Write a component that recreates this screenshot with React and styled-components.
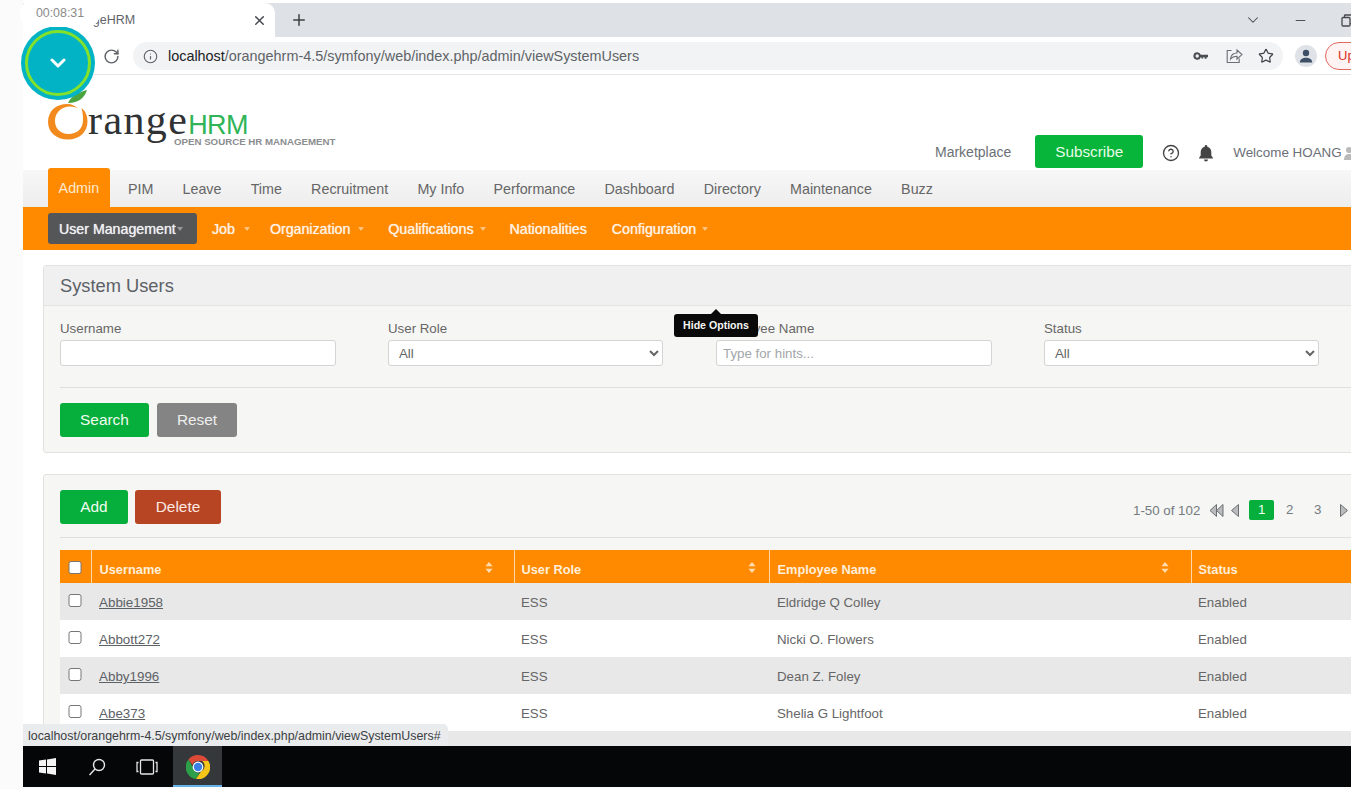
import React from "react";
import styled, { createGlobalStyle } from "styled-components";
import { X, Plus, ChevronDown, Minus, RotateCw, Info, Star, CircleHelp } from "lucide-react";

const Global = createGlobalStyle`
  html, body { margin: 0; padding: 0; background: #fbfbfb; }
  body { font-family: "Liberation Sans", Arial, sans-serif; }
  * { box-sizing: border-box; }
`;

const Screen = styled.div`
  position: relative;
  width: 1351px;
  height: 789px;
  overflow: hidden;
  display: flex;
  background: #fbfbfb;
`;
const Gutter = styled.div`
  flex: 0 0 23px;
`;
const Browser = styled.div`
  flex: 0 0 1328px;
  width: 1328px;
  height: 787px;
  padding-top: 3px;
  display: flex;
  flex-direction: column;
  overflow: hidden;
  position: relative;
  background: #fff;
`;

/* ---------- Chrome ---------- */
const TabStrip = styled.div`
  flex: 0 0 34px;
  display: flex;
  align-items: center;
  background: #dee1e6;
`;
const Tab = styled.div`
  width: 252px;
  height: 34px;
  background: #fff;
  border-radius: 10px 10px 0 0;
  display: flex;
  align-items: center;
  justify-content: space-between;
  padding: 0 8px 0 42px;
  font-size: 12.5px;
  color: #5f6368;
  svg { color: #45494e; }
`;
const NewTab = styled.div`
  margin-left: 15px;
  display: flex;
  color: #3c4043;
`;
const CaptionWrap = styled.div`
  margin-left: auto;
  display: flex;
  align-items: center;
  gap: 33px;
  margin-right: -3px;
  color: #45494e;
  & > :first-child { margin-right: -2px; }
`;
const Toolbar = styled.div`
  flex: 0 0 38px;
  display: flex;
  align-items: center;
  padding: 1px 0 0 80px;
  background: #fff;
  border-bottom: 1px solid #e3e5e8;
  color: #5f6368;
`;
const Reload = styled.div`
  display: flex;
  flex: 0 0 30px;
`;
const Omnibox = styled.div`
  flex: 0 0 1150px;
  height: 28px;
  border-radius: 14px;
  background: #f1f3f4;
  display: flex;
  align-items: center;
  padding: 0 8px 0 10px;
  font-size: 14.4px;
  color: #5f6368;
  svg { flex: none; }
`;
const Url = styled.span`
  margin-left: 10px;
  flex: 1;
  b { font-weight: 400; color: #202124; }
`;
const OmniActions = styled.div`
  display: flex;
  align-items: center;
  gap: 15px;
  padding-right: 1px;
`;
const Avatar = styled.div`
  flex: none;
  width: 22px;
  height: 22px;
  border-radius: 50%;
  background: #dfe3e8;
  margin-left: 12px;
  display: flex;
  align-items: center;
  justify-content: center;
`;
const UpgradePill = styled.div`
  flex: none;
  width: 70px;
  height: 28px;
  margin-left: 8px;
  border: 1px solid #e0685e;
  border-radius: 14px;
  font-size: 13px;
  line-height: 26px;
  padding-left: 12px;
  color: #d93025;
  background: #fff4f3;
`;

/* ---------- Page ---------- */
const Page = styled.div`
  flex: 1;
  min-height: 0;
  overflow: hidden;
  background: #fff;
  display: flex;
  flex-direction: column;
`;
const Header = styled.div`
  flex: 0 0 95px;
  display: flex;
  align-items: flex-end;
  padding: 0 0 2px 25px;
  z-index: 1;
`;
const Logo = styled.div`
  flex: 0 0 290px;
  width: 290px;
  min-width: 0;
  align-self: flex-start;
  margin-top: 15px;
  display: flex;
`;
const LogoMark = styled.svg`
  flex: none;
  width: 42px;
  height: 52px;
  margin-right: -2px;
`;
const LogoText = styled.div`
  padding-top: 6px;
`;
const LogoWord = styled.div`
  font-family: "Liberation Serif", serif;
  font-size: 42px;
  line-height: 48px;
  letter-spacing: 1.4px;
  color: #303234;
  white-space: nowrap;
`;
const LogoHrm = styled.span`
  font-family: "Liberation Sans", sans-serif;
  font-size: 27px;
  letter-spacing: -0.7px;
  color: #2fb457;
`;
const LogoTag = styled.div`
  margin: -13px 0 0 86px;
  font-size: 9.7px;
  font-weight: 700;
  line-height: 11px;
  color: #8b8d8f;
  white-space: nowrap;
`;
const UserArea = styled.div`
  margin-left: 597px;
  display: flex;
  align-items: center;
  font-size: 14px;
  color: #6b7076;
  white-space: nowrap;
  height: 33px;
`;
const Subscribe = styled.div`
  width: 108px;
  height: 33px;
  margin: 0 19px 0 24px;
  border-radius: 3px;
  background: #06b53a;
  color: #eafbe8;
  font-size: 15.3px;
  line-height: 33px;
  text-align: center;
`;
const HeaderIcon = styled.span`
  display: flex;
  color: #444;
  margin-top: 2px;
  margin-right: ${(p) => p.$gap}px;
`;
const Welcome = styled.span`
  display: flex;
  align-items: center;
  gap: 2px;
  margin-top: 2px;
  font-size: 13.4px;
`;

const Menu = styled.div`
  flex: 0 0 37px;
  display: flex;
  align-items: stretch;
  padding-left: 25px;
  background: linear-gradient(#f7f7f7, #ededed);
  font-size: 14.3px;
  color: #666;
`;
const MenuItem = styled.div`
  display: flex;
  align-items: center;
  white-space: nowrap;
  padding: 0 14.6px;
  ${(p) =>
    p.$active &&
    `
    margin: -2px 3.6px 0 0;
    padding: 0 10.6px;
    background: #ff8a00;
    color: #ffe9cf;
    border-radius: 3px 3px 0 0;
  `}
`;
const SubMenu = styled.div`
  flex: 0 0 43px;
  display: flex;
  align-items: center;
  padding-left: 25px;
  background: #ff8a00;
  font-size: 14.2px;
  color: #fff1e0;
  text-shadow: 0 0 0.8px currentColor;
`;
const SubItem = styled.div`
  display: flex;
  align-items: center;
  white-space: nowrap;
  height: 31px;
  ${(p) =>
    p.$active
      ? `
    width: 149px;
    padding-left: 11px;
    background: #555657;
    border-radius: 3px;
    color: #eef0f2;
    margin-right: 15px;
  `
      : `margin-right: ${p.$mr ?? 24}px;`}
`;
const Caret = styled.i`
  display: block;
  width: 0;
  height: 0;
  margin: 1px 0 0 ${(p) => p.$gap ?? 6}px;
  margin-right: ${(p) => p.$after ?? 0}px;
  border: 3.5px solid transparent;
  border-bottom: 0;
  border-top: 4px solid ${(p) => p.$color || "#ffc37d"};
`;
const Body = styled.div`
  width: 1350px;
  padding: 15px 0 0 20px;
  display: flex;
  flex-direction: column;
  gap: 21px;
  font-size: 13.3px;
  color: #666;
`;
const Panel = styled.div`
  width: 1330px;
  border: 1px solid #e2e2e0;
  border-radius: 3px;
  background: #f6f6f4;
  flex: none;
`;
const PanelHead = styled.div`
  height: 40px;
  padding-left: 16px;
  background: #f0f0f0;
  border-bottom: 1px solid #e4e4e4;
  font-size: 18.3px;
  line-height: 39px;
  color: #5c6166;
`;
const FilterForm = styled.div`
  padding: 15px 16px 15px;
`;
const Fields = styled.div`
  display: grid;
  grid-template-columns: repeat(4, 276px);
  column-gap: 52px;
`;
const Field = styled.label`
  display: flex;
  flex-direction: column;
  gap: 3px;
  line-height: 16px;
  color: #666;
`;
const TextInput = styled.input`
  width: 100%;
  height: 26px;
  padding: 0 6px;
  border: 1px solid #d4d4d4;
  border-radius: 3px;
  background: #fff;
  font: 13.3px "Liberation Sans", sans-serif;
  color: #555;
  outline: none;
  &::placeholder { color: #a2a6a8; }
`;
const SelectInput = styled.select`
  width: 275px;
  height: 26px;
  padding: 0 6px;
  border: 1px solid #d4d4d4;
  border-radius: 3px;
  background: #fff;
  font: 13.3px "Liberation Sans", sans-serif;
  color: #666;
  outline: none;
`;
const Rule = styled.div`
  height: 1px;
  background: #dfdfdd;
  margin: ${(p) => p.$margin};
`;
const Actions = styled.div`
  display: flex;
  align-items: center;
  gap: ${(p) => p.$gap}px;
`;
const Button = styled.div`
  width: ${(p) => p.$w}px;
  height: 34px;
  border-radius: 3px;
  background: ${(p) => p.$bg};
  color: ${(p) => p.$fg || "#f2fbef"};
  font-size: 15.4px;
  line-height: 34px;
  text-align: center;
`;
const ListPanel = styled.div`
  padding: 15px 16px 0;
`;
const ListBar = styled.div`
  display: flex;
  align-items: center;
  height: 34px;
`;
const Pager = styled.div`
  margin: 6px 0 0 auto;
  width: 223px;
  display: flex;
  align-items: center;
  font-size: 13.3px;
  color: #747a80;
  white-space: nowrap;
`;
const PagerIcon = styled.svg`
  flex: none;
  margin-left: ${(p) => p.$ml}px;
`;
const PageNum = styled.span`
  flex: none;
  width: 25px;
  height: 20px;
  line-height: 20px;
  text-align: center;
  margin-left: ${(p) => p.$ml}px;
  border-radius: 2px;
  ${(p) => p.$active && `background: #06ae3c; color: #f0fff0;`}
`;
const Table = styled.table`
  width: 1296px;
  table-layout: fixed;
  border-collapse: collapse;
`;
const HeadCell = styled.th`
  height: 33px;
  padding: 5px ${(p) => p.$pr ?? 8}px 0 ${(p) => p.$pl ?? 7}px;
  background: #ff8a00;
  border-left: 1px solid #ffd7a8;
  color: #ffeeda;
  font-size: 12.8px;
  font-weight: 700;
  text-align: left;
  vertical-align: middle;
  &:first-child { border-left: 0; padding: 3px 0 0; text-align: center; }
`;
const HeadInner = styled.div`
  display: flex;
  justify-content: space-between;
  align-items: center;
  svg { margin-top: -4px; }
`;
const Row = styled.tr`
  height: 37px;
  background: ${(p) => (p.$odd ? "#e8e8e8" : "#fff")};
`;
const Cell = styled.td`
  padding: 2px 7px 0 ${(p) => p.$pl ?? 7}px;
  font-size: 13.3px;
  color: #666;
  &:first-child { padding: 0; text-align: center; }
`;
const UserLink = styled.a`
  color: #5d6266;
  text-decoration: underline;
  font-size: 13.4px;
`;
const Check = styled.span`
  display: inline-block;
  width: 13px;
  height: 13px;
  border: 1px solid #767676;
  border-radius: 2.5px;
  background: #fff;
  transform: translate(-0.5px, -2px);
  vertical-align: middle;
`;

/* ---------- Overlays ---------- */
const RecorderTimer = styled.div`
  position: absolute;
  left: 20px;
  top: 0;
  width: 80px;
  height: 27px;
  border-radius: 13px;
  background: #fff;
  color: #8a8a8a;
  font-size: 12.4px;
  line-height: 26px;
  text-align: center;
  z-index: 5;
`;
const RecorderButton = styled.div`
  position: absolute;
  left: 21px;
  top: 26px;
  width: 74px;
  height: 74px;
  border-radius: 50%;
  background: #02b3c5;
  display: flex;
  align-items: center;
  justify-content: center;
  color: #fff;
  z-index: 4;
  &::before {
    content: "";
    position: absolute;
    inset: 4px;
    border: 3.5px solid #83e12c;
    border-radius: 50%;
  }
`;
const Tooltip = styled.div`
  position: absolute;
  left: 651px;
  top: 314px;
  width: 84px;
  height: 23px;
  border-radius: 3px;
  background: #0a0a0a;
  color: #f4f4f4;
  font-size: 10.6px;
  font-weight: 700;
  line-height: 22px;
  text-align: center;
  z-index: 3;
  &::before {
    content: "";
    position: absolute;
    left: 37px;
    top: -5px;
    border: 5px solid transparent;
    border-top: 0;
    border-bottom: 5px solid #0a0a0a;
  }
`;
const StatusBubble = styled.div`
  position: absolute;
  left: 0;
  bottom: 41px;
  height: 22px;
  padding: 0 7px 0 5px;
  background: #e9ebed;
  border-radius: 0 5px 0 0;
  color: #3c4043;
  font-size: 12.4px;
  line-height: 24px;
  z-index: 3;
`;

/* ---------- Taskbar ---------- */
const Taskbar = styled.div`
  flex: 0 0 41px;
  display: flex;
  align-items: stretch;
  background: #040608;
  z-index: 2;
`;
const TaskSlot = styled.div`
  width: ${(p) => p.$w}px;
  padding-right: ${(p) => p.$pr ?? 0}px;
  display: flex;
  align-items: center;
  justify-content: center;
  color: #f2f2f2;
  ${(p) => p.$active && `background: #34383b; border-bottom: 2px solid #63b2ea; padding-top: 2px;`}
`;

const users = [
  ["Abbie1958", "ESS", "Eldridge Q Colley", "Enabled"],
  ["Abbott272", "ESS", "Nicki O. Flowers", "Enabled"],
  ["Abby1996", "ESS", "Dean Z. Foley", "Enabled"],
  ["Abe373", "ESS", "Shelia G Lightfoot", "Enabled"],
  ["Abel1990", "ESS", "Angela Salome Stand", "Enabled"],
];

const SortIcon = () => (
  <svg width="8" height="11" viewBox="0 0 8 11" fill="#ffdcb0">
    <path d="M4 0l3.6 4.2H.4zM4 11L.4 6.8h7.2z" />
  </svg>
);

const Tri = ({ ml, double }) => (
  <PagerIcon $ml={ml} width={double ? 15 : 10} height="15" viewBox={double ? "0 0 15 15" : "0 0 10 15"} fill="#b9bbbc" stroke="#6d7073" strokeWidth="1">
    {double ? (
      <>
        <path d="M7.5 1.5v12L1 7.5z" />
        <path d="M14 1.5v12L7.5 7.5z" />
      </>
    ) : (
      <path d="M8.5 1.5v12L1.5 7.5z" />
    )}
  </PagerIcon>
);

export default function App() {
  return (
    <Screen>
      <Global />
      <Gutter />
      <Browser>
        <TabStrip>
          <Tab>
            <span>OrangeHRM</span>
            <X size={15} strokeWidth={2.4} />
          </Tab>
          <NewTab>
            <Plus size={18} strokeWidth={2} />
          </NewTab>
          <CaptionWrap>
            <ChevronDown size={18} strokeWidth={1.4} />
            <Minus size={15} strokeWidth={1.5} />
            <svg width="13" height="13" viewBox="0 0 13 13" fill="none" stroke="currentColor" strokeWidth="1.3">
              <rect x="1" y="3.5" width="8" height="8.5" rx="1" />
              <path d="M3.5 3.5V1.6A.6.6 0 0 1 4.1 1H11.4a.6.6 0 0 1 .6.6V9a.6.6 0 0 1-.6.6H9" />
            </svg>
          </CaptionWrap>
        </TabStrip>
        <Toolbar>
          <Reload>
            <RotateCw size={17} strokeWidth={2.1} />
          </Reload>
          <Omnibox>
            <Info size={15} strokeWidth={1.8} />
            <Url>
              <b>localhost</b>/orangehrm-4.5/symfony/web/index.php/admin/viewSystemUsers
            </Url>
            <OmniActions>
              <svg width="18" height="18" viewBox="0 0 18 18" fill="#4a4e52">
                <path fillRule="evenodd" d="M5.2 5.2a3.8 3.8 0 0 1 3.6 2.6H16v2.4h-1.4v1.6h-2v-1.6h-1.4v1.2H9.4v-1.2h-.6a3.8 3.8 0 1 1-3.6-5zm0 2.1a1.7 1.7 0 1 0 0 3.4 1.7 1.7 0 0 0 0-3.4z" />
              </svg>
              <svg width="18" height="18" viewBox="0 0 18 18" fill="none" stroke="#6a6e72" strokeWidth="1.1">
                <path d="M6.5 3.5H2.2v12h12v-4" />
                <path d="M5.5 12c.4-3.8 3-6 6.5-6V3l5 4.6-5 4.4V9.2c-2.8 0-5 .8-6.5 2.8z" />
              </svg>
              <Star size={16} strokeWidth={1.8} color="#3f4246" />
            </OmniActions>
          </Omnibox>
          <Avatar>
            <svg width="14" height="14" viewBox="0 0 14 14" fill="#3e5065">
              <circle cx="7" cy="4" r="3.2" />
              <path d="M.8 13.5c0-3.2 2.8-4.8 6.2-4.8s6.2 1.6 6.2 4.8z" />
            </svg>
          </Avatar>
          <UpgradePill>Update</UpgradePill>
        </Toolbar>
        <Page>
          <Header>
            <Logo>
              <LogoMark viewBox="0 0 42 52">
                <path d="M19 14C9 14 0 20 0 32c0 10 8 17.5 20 17.5 12 0 19.5-8 19.5-18 0-6-2-10.5-6-13.5 1 4 1.5 7 1.5 12 0 9-6.5 14-14.5 14-8 0-13.5-5.5-13.5-13 0-8 6-14.5 15-14.5 4 0 7 1 9 2.5C27.5 16 24 14 19 14z" fill="#f28a1e" />
                <path d="M20 13c3-7 11-11 19-13-2 7-8 13-19 13z" fill="#4aa53f" />
              </LogoMark>
              <LogoText>
                <LogoWord>
                  range<LogoHrm>HRM</LogoHrm>
                </LogoWord>
                <LogoTag>OPEN SOURCE HR MANAGEMENT</LogoTag>
              </LogoText>
            </Logo>
            <UserArea>
              <span>Marketplace</span>
              <Subscribe>Subscribe</Subscribe>
              <HeaderIcon $gap={17}>
                <CircleHelp size={18} strokeWidth={1.8} />
              </HeaderIcon>
              <HeaderIcon $gap={18}>
                <svg width="18" height="18" viewBox="0 0 18 18" fill="#444">
                  <path d="M9 1a1.3 1.3 0 0 1 1.3 1.3v.5c2.6.6 4 2.7 4 5.2v3.5l1.6 2.2v.8H2.1v-.8l1.6-2.2V8c0-2.5 1.4-4.6 4-5.2v-.5A1.3 1.3 0 0 1 9 1zM7 15.5h4a2 2 0 0 1-4 0z" />
                </svg>
              </HeaderIcon>
              <Welcome>
                Welcome HOANG
                <svg width="10" height="16" viewBox="0 0 10 16" fill="#b9b9b9">
                  <circle cx="5" cy="5" r="3" />
                  <path d="M0 15c0-4 2-6 5-6s5 2 5 6z" />
                </svg>
              </Welcome>
            </UserArea>
          </Header>
          <Menu>
            <MenuItem $active>Admin</MenuItem>
            {["PIM", "Leave", "Time", "Recruitment", "My Info", "Performance", "Dashboard", "Directory", "Maintenance", "Buzz"].map((m) => (
              <MenuItem key={m}>{m}</MenuItem>
            ))}
          </Menu>
          <SubMenu>
            <SubItem $active>
              User Management
              <Caret $gap={1} $color="#9a9a9a" />
            </SubItem>
            <SubItem>
              Job
              <Caret $gap={9} $after={-4} />
            </SubItem>
            <SubItem>
              Organization
              <Caret $gap={8} />
            </SubItem>
            <SubItem>
              Qualifications
              <Caret />
            </SubItem>
            <SubItem $mr={25}>Nationalities</SubItem>
            <SubItem>
              Configuration
              <Caret />
            </SubItem>
          </SubMenu>
          <Body>
            <Panel>
              <PanelHead>System Users</PanelHead>
              <FilterForm>
                <Fields>
                  <Field>
                    Username
                    <TextInput readOnly />
                  </Field>
                  <Field>
                    User Role
                    <SelectInput defaultValue="All">
                      <option>All</option>
                    </SelectInput>
                  </Field>
                  <Field>
                    Employee Name
                    <TextInput readOnly placeholder="Type for hints..." />
                  </Field>
                  <Field>
                    Status
                    <SelectInput defaultValue="All">
                      <option>All</option>
                    </SelectInput>
                  </Field>
                </Fields>
                <Rule $margin="21px 0 15px" />
                <Actions $gap={8}>
                  <Button $w={89} $bg="#06ae3c">Search</Button>
                  <Button $w={80} $bg="#848484" $fg="#eeeeee">Reset</Button>
                </Actions>
              </FilterForm>
            </Panel>
            <Panel>
              <ListPanel>
                <ListBar>
                  <Actions $gap={7}>
                    <Button $w={68} $bg="#06ae3c">Add</Button>
                    <Button $w={86} $bg="#b74423" $fg="#fbe9e2">Delete</Button>
                  </Actions>
                  <Pager>
                    <span>1-50 of 102</span>
                    <Tri ml={9} double />
                    <Tri ml={6} />
                    <PageNum $active $ml={9}>1</PageNum>
                    <PageNum $ml={3}>2</PageNum>
                    <PageNum $ml={3}>3</PageNum>
                    <PagerIcon $ml={9} width="10" height="15" viewBox="0 0 10 15" fill="#b9bbbc" stroke="#6d7073">
                      <path d="M1.5 1.5v12l7-6z" />
                    </PagerIcon>
                  </Pager>
                </ListBar>
                <Rule $margin="13px 0 12px" />
                <Table>
                  <colgroup>
                    <col width="31" />
                    <col width="423" />
                    <col width="255" />
                    <col width="422" />
                    <col width="165" />
                  </colgroup>
                  <thead>
                    <tr>
                      <HeadCell><Check /></HeadCell>
                      <HeadCell $pl={8} $pr={21}><HeadInner>Username<SortIcon /></HeadInner></HeadCell>
                      <HeadCell $pr={13}><HeadInner>User Role<SortIcon /></HeadInner></HeadCell>
                      <HeadCell $pl={8} $pr={22}><HeadInner>Employee Name<SortIcon /></HeadInner></HeadCell>
                      <HeadCell>Status</HeadCell>
                    </tr>
                  </thead>
                  <tbody>
                    {users.map((u, i) => (
                      <Row key={u[0]} $odd={i % 2 === 0}>
                        <Cell><Check /></Cell>
                        <Cell $pl={8}><UserLink>{u[0]}</UserLink></Cell>
                        <Cell>{u[1]}</Cell>
                        <Cell $pl={8}>{u[2]}</Cell>
                        <Cell>{u[3]}</Cell>
                      </Row>
                    ))}
                  </tbody>
                </Table>
              </ListPanel>
            </Panel>
          </Body>
        </Page>
        <Tooltip>Hide Options</Tooltip>
        <StatusBubble>localhost/orangehrm-4.5/symfony/web/index.php/admin/viewSystemUsers#</StatusBubble>
        <Taskbar>
          <TaskSlot $w={48}>
            <svg width="17" height="17" viewBox="0 0 17 17" fill="#f4f4f4">
              <path d="M0 2.6l7-1v6.4H0zM8 1.4L17 0v8H8zM0 9h7v6.4l-7-1zM8 9h9v8l-9-1.4z" />
            </svg>
          </TaskSlot>
          <TaskSlot $w={51}>
            <svg width="18" height="18" viewBox="0 0 18 18" fill="none" stroke="#e6e6e6" strokeWidth="1.4">
              <circle cx="11" cy="7" r="5.5" />
              <path d="M7 11l-5.5 6" />
            </svg>
          </TaskSlot>
          <TaskSlot $w={51} $pr={2}>
            <svg width="22" height="16" viewBox="0 0 22 16" fill="none" stroke="#e6e6e6" strokeWidth="1.3">
              <rect x="4.5" y="1" width="13" height="14" rx="1" />
              <path d="M2.5 3.5H1v9h1.5M19.5 3.5H21v9h-1.5" />
            </svg>
          </TaskSlot>
          <TaskSlot $w={49} $active>
            <svg width="24" height="24" viewBox="0 0 24 24">
              <path d="M12 0a12 12 0 0 1 10.4 6H12a6 6 0 0 0-5.6 3.9L2.4 4.6A12 12 0 0 1 12 0z" fill="#de4a38" />
              <path d="M2.4 4.6l5 8.4a5 5 0 0 0 6.4 4.7L10 24A12 12 0 0 1 2.4 4.6z" fill="#2c9f48" />
              <path d="M22.4 6A12 12 0 0 1 10 24l5-7.6a6 6 0 0 0 1-10.4z" fill="#f5c518" />
              <circle cx="12" cy="12" r="5.4" fill="#fff" />
              <circle cx="12" cy="12" r="4.2" fill="#3a80e8" />
            </svg>
          </TaskSlot>
        </Taskbar>
      </Browser>
      <RecorderButton>
        <svg width="16" height="10" viewBox="0 0 16 10" fill="none" stroke="#fff" strokeWidth="3" strokeLinecap="round" strokeLinejoin="round">
          <path d="M2 2l6 6 6-6" />
        </svg>
      </RecorderButton>
      <RecorderTimer>00:08:31</RecorderTimer>
    </Screen>
  );
}
